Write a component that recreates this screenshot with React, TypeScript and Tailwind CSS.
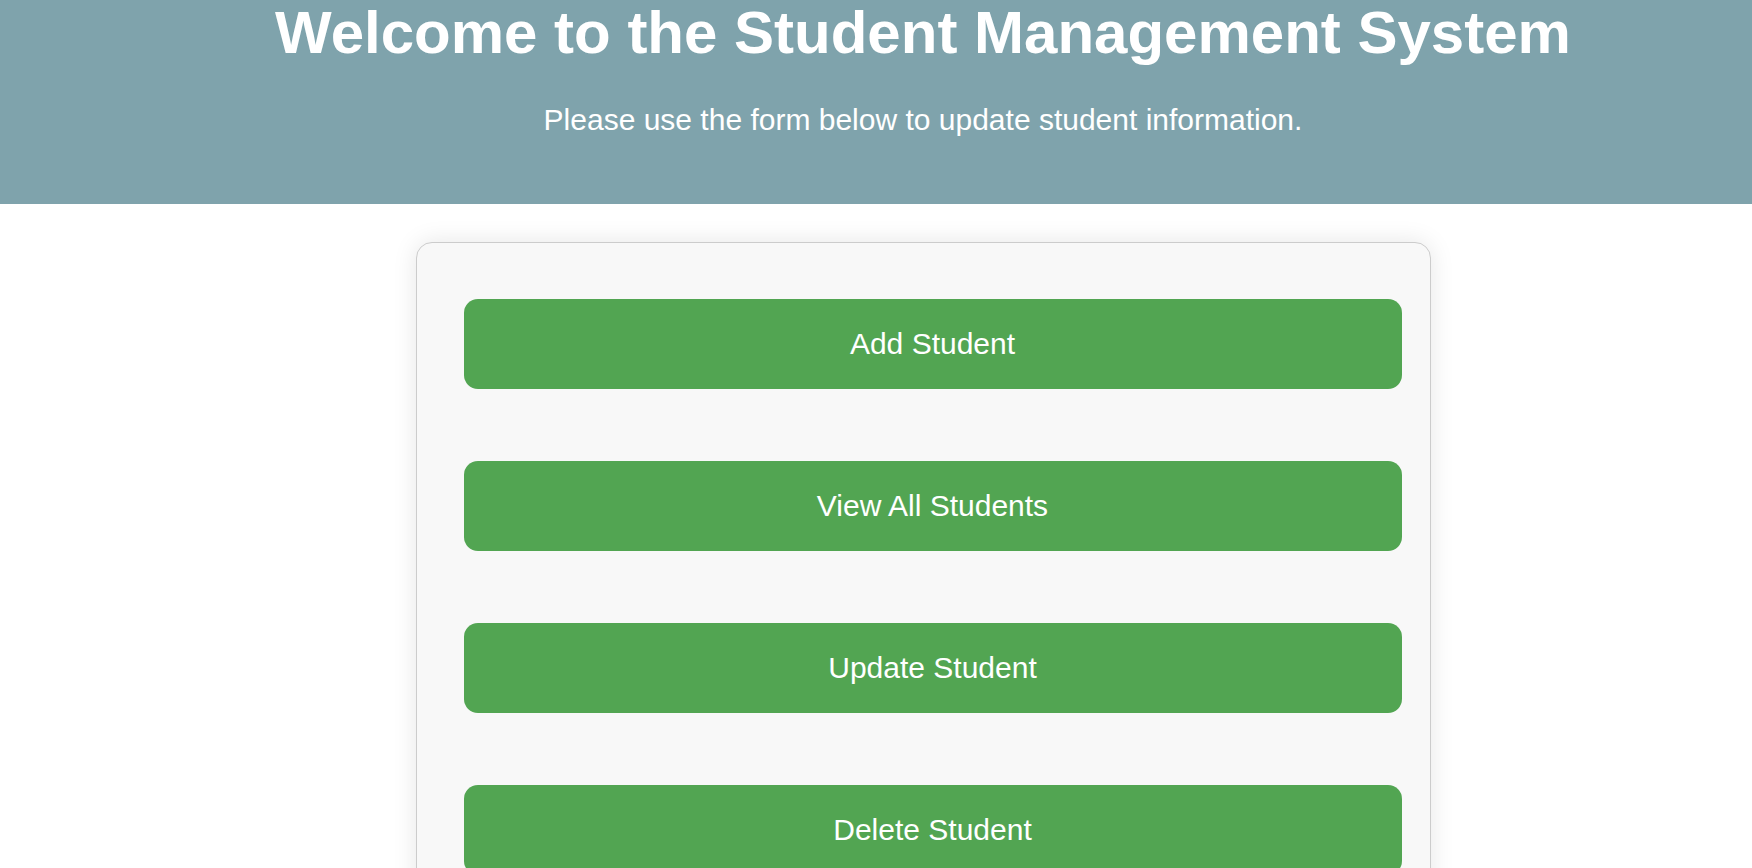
import React from "react";

const buttons = ["Add Student", "View All Students", "Update Student", "Delete Student"];

export default function App() {
  return (
    <div className="min-h-[868px] w-full overflow-hidden bg-white font-['Liberation_Sans',Arial,sans-serif]">
      <header className="h-[204px] w-full bg-[#7fa3ac] pl-[94px] pt-[3px] text-center text-white">
        <h1 className="text-[60px] font-bold leading-none">Welcome to the Student Management System</h1>
        <p className="mt-[39px] text-[30px] leading-[36px]">Please use the form below to update student information.</p>
      </header>
      <main className="flex justify-center pl-[94px] pt-[38px]">
        <div className="flex w-[1015px] flex-col gap-[72px] rounded-[16px] border border-[#cccccc] bg-[#f8f8f8] pb-[60px] pl-[47px] pr-[28px] pt-[56px] shadow-[0_0_24px_rgba(0,0,0,0.1)]">
          {buttons.map((b) => (
            <button
              key={b}
              className="flex h-[90px] w-[938px] items-center justify-center rounded-[14px] bg-[#52a552] pb-[2px] text-[30px] text-white"
            >
              {b}
            </button>
          ))}
        </div>
      </main>
    </div>
  );
}
